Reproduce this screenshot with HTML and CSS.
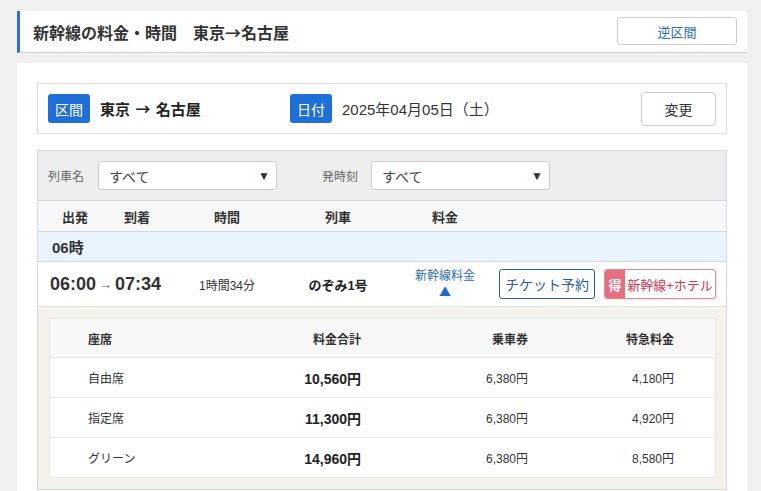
FILE: index.html
```html
<!DOCTYPE html>
<html lang="ja">
<head>
    <meta charset="UTF-8">
    <meta name="viewport" content="width=device-width, initial-scale=1.0">
    <title>新幹線の料金・時間</title>
    <link rel="stylesheet" href="styles.css">
</head>
<body>
    <div class="page">
        <div class="title-bar">
            <h1 class="title">新幹線の料金・時間　東京→名古屋</h1>
            <button class="reverse-btn">逆区間</button>
        </div>

        <div class="main">
            <div class="route-box">
                <div class="route-item route">
                    <span class="badge">区間</span>
                    <span class="route-text">東京 → 名古屋</span>
                </div>
                <div class="route-item date">
                    <span class="badge">日付</span>
                    <span class="date-text">2025年04月05日（土）</span>
                </div>
                <button class="change-btn">変更</button>
            </div>

            <div class="timetable">
                <div class="filter-bar">
                    <span class="filter-label">列車名</span>
                    <div class="select">すべて<span class="arrow">▼</span></div>
                    <span class="filter-label second">発時刻</span>
                    <div class="select">すべて<span class="arrow">▼</span></div>
                </div>

                <div class="head-row">
                    <span class="hc c1">出発</span>
                    <span class="hc c2">到着</span>
                    <span class="hc c3">時間</span>
                    <span class="hc c4">列車</span>
                    <span class="hc c5">料金</span>
                </div>

                <div class="hour-row">06時</div>

                <div class="train-row">
                    <div class="times">06:00<span class="small-arrow">→</span>07:34</div>
                    <div class="duration">1時間34分</div>
                    <div class="train-name">のぞみ1号</div>
                    <div class="fare-link">新幹線料金<span class="up">▲</span></div>
                    <button class="ticket-btn">チケット予約</button>
                    <button class="hotel-btn"><span class="toku">得</span><span class="hotel-text">新幹線+ホテル</span></button>
                </div>

                <div class="detail">
                    <div class="fare-table">
                        <div class="fare-row fare-head">
                            <span class="seat">座席</span>
                            <span class="num">料金合計</span>
                            <span class="num">乗車券</span>
                            <span class="num">特急料金</span>
                        </div>
                        <div class="fare-row">
                            <span class="seat">自由席</span>
                            <span class="num total">10,560円</span>
                            <span class="num">6,380円</span>
                            <span class="num">4,180円</span>
                        </div>
                        <div class="fare-row">
                            <span class="seat">指定席</span>
                            <span class="num total">11,300円</span>
                            <span class="num">6,380円</span>
                            <span class="num">4,920円</span>
                        </div>
                        <div class="fare-row">
                            <span class="seat">グリーン</span>
                            <span class="num total">14,960円</span>
                            <span class="num">6,380円</span>
                            <span class="num">8,580円</span>
                        </div>
                    </div>
                </div>
            </div>
        </div>
    </div>
</body>
</html>
```

FILE: styles.css
```css
*{
   margin: 0;
   padding: 0;
   box-sizing: border-box;
}

body{
   font-family: "Liberation Sans", "Noto Sans CJK JP", sans-serif;
   font-size: 13px;
   color: #333;
   background-color: #f0f0f0;
   overflow: hidden;
}

button{
   font-family: inherit;
   background: #fff;
   cursor: pointer;
}

.page{
   width: 747px;
   padding: 11px 0 0 17px;
}

/* title */
.title-bar{
   height: 42px;
   background-color: #fff;
   border-left: 3px solid #2d72d2;
   border-bottom: 1px solid #cfcfcf;
   display: flex;
   align-items: center;
   justify-content: space-between;
   padding: 0 10px 0 13px;
}

.title{
   font-family: "Noto Sans CJK JP", sans-serif;
   font-size: 16px;
   font-weight: bold;
   color: #333;
}

.reverse-btn{
   width: 120px;
   height: 28px;
   border: 1px solid #ccc;
   border-radius: 3px;
   color: #2a6bb8;
   font-size: 13px;
   margin-top: -1px;
}

/* main panel */
.main{
   margin-top: 10px;
   background-color: #fff;
   padding: 20px 20px 0;
   height: 440px;
}

.route-box{
   height: 51px;
   border: 1px solid #ddd;
   display: flex;
   align-items: center;
   padding: 0 10px;
}

.route-item{
   display: flex;
   align-items: center;
   gap: 10px;
}

.route{
   width: 242px;
}

.badge{
   display: inline-flex;
   align-items: center;
   justify-content: center;
   width: 42px;
   height: 29px;
   border-radius: 3px;
   background-color: #1f6fd6;
   color: #fff;
   font-size: 14px;
}

.route-text{
   font-family: "Noto Sans CJK JP", sans-serif;
   font-size: 15px;
   font-weight: bold;
   color: #222;
   word-spacing: 2px;
}

.date-text{
   font-size: 15px;
   color: #333;
}

.change-btn{
   margin-left: auto;
   width: 75px;
   height: 34px;
   border: 1px solid #ccc;
   border-radius: 4px;
   font-size: 14px;
   color: #333;
}

/* timetable */
.timetable{
   margin-top: 16px;
   border: 1px solid #d6d6e2;
   border-bottom: none;
}

.filter-bar{
   height: 50px;
   background-color: #eee;
   border-bottom: 1px solid #d6d6e2;
   display: flex;
   align-items: center;
   padding: 0 10px;
}

.filter-label{
   font-size: 12px;
   color: #666;
   width: 50px;
}

.filter-label.second{
   margin-left: 45px;
   width: 49px;
}

.select{
   width: 179px;
   height: 29px;
   background-color: #fff;
   border: 1px solid #ccc;
   border-radius: 3px;
   display: flex;
   align-items: center;
   justify-content: space-between;
   padding: 0 6px 0 10px;
   font-size: 14px;
   color: #444;
}

.arrow{
   font-size: 12px;
   color: #333;
}

.head-row{
   height: 31px;
   background-color: #f7f7f7;
   border-bottom: 1px solid #d6d6e2;
   display: flex;
   align-items: center;
}

.hc{
   font-size: 13px;
   font-weight: bold;
   color: #333;
   text-align: center;
}

.c1{ width: 74px; }
.c2{ width: 50px; }
.c3{ width: 130px; }
.c4{ width: 92px; }
.c5{ width: 122px; }

.hour-row{
   height: 30px;
   background-color: #eaf4fe;
   border-bottom: 1px solid #d6d6e2;
   display: flex;
   align-items: center;
   padding-left: 14px;
   font-size: 15px;
   font-weight: bold;
   color: #333;
}

.train-row{
   height: 45px;
   background-color: #fff;
   border-bottom: 1px solid #e6e3da;
   display: flex;
   align-items: center;
}

.times{
   width: 132px;
   padding-left: 12px;
   font-size: 18px;
   font-weight: bold;
   color: #333;
   white-space: nowrap;
}

.small-arrow{
   font-size: 13px;
   font-weight: normal;
   color: #555;
   margin: 0 3px;
   position: relative;
   top: -1px;
}

.duration{
   width: 114px;
   text-align: center;
   font-size: 12px;
   color: #333;
}

.train-name{
   width: 108px;
   text-align: center;
   font-size: 13px;
   font-weight: bold;
   color: #222;
}

.fare-link{
   width: 106px;
   text-align: center;
   font-size: 12px;
   color: #2a6bb8;
   line-height: 15px;
   display: flex;
   flex-direction: column;
   align-items: center;
}

.up{
   font-family: "Noto Sans CJK JP", sans-serif;
   font-size: 12px;
   color: #1e6cd0;
}

.ticket-btn{
   margin-left: 1px;
   width: 96px;
   height: 30px;
   border: 1px solid #2a5f9f;
   border-radius: 3px;
   color: #2a5a9a;
   font-size: 14px;
}

.hotel-btn{
   margin-left: 9px;
   width: 112px;
   height: 30px;
   border: 1px solid #e48a98;
   border-radius: 3px;
   display: flex;
   overflow: hidden;
   box-shadow: 1px 1px 1px rgba(0, 0, 0, 0.1);
}

.toku{
   width: 20px;
   height: 100%;
   background-color: #e46f81;
   color: #fff;
   font-size: 13px;
   font-weight: bold;
   display: flex;
   align-items: center;
   justify-content: center;
}

.hotel-text{
   flex: 1;
   height: 100%;
   display: flex;
   align-items: center;
   justify-content: center;
   color: #d2354d;
   font-size: 13px;
   white-space: nowrap;
}

/* fare detail */
.detail{
   background-color: #f4f2ea;
   padding: 11px 10px 11px 11px;
   border-bottom: 1px solid #d6d6e2;
}

.fare-table{
   background-color: #fff;
   border: 1px solid #e8e8e8;
}

.fare-row{
   display: grid;
   grid-template-columns: 199px 112px 167px 146px;
   align-items: center;
   height: 40px;
   border-top: 1px solid #e8e8e8;
   font-size: 12px;
   color: #333;
}

.fare-row.fare-head{
   height: 38px;
   border-top: none;
   background-color: #f8f8f8;
   font-weight: bold;
}

.seat{
   padding-left: 38px;
}

.num{
   text-align: right;
}

.total{
   font-size: 14px;
   font-weight: bold;
   color: #222;
}
```
